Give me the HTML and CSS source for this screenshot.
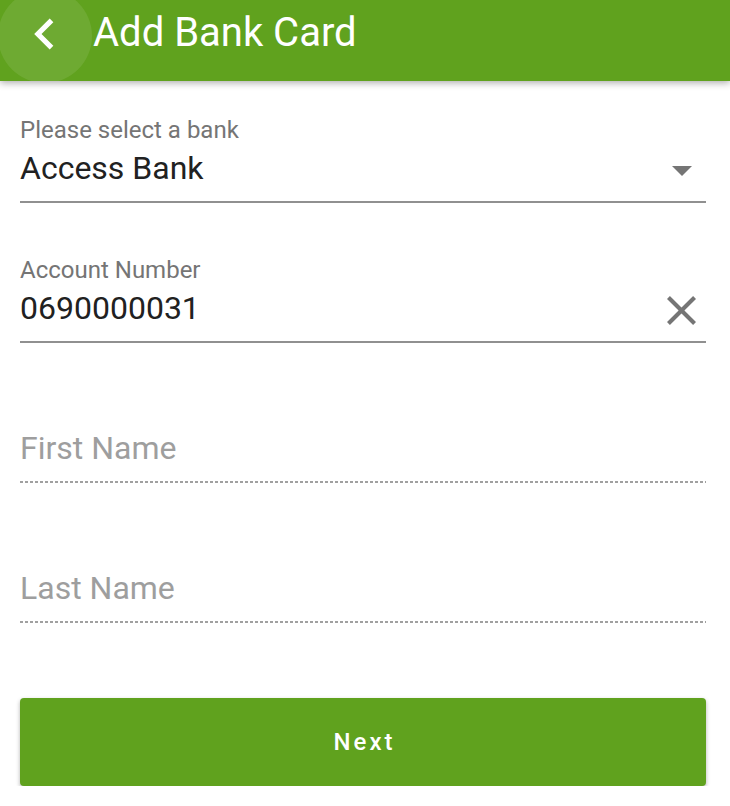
FILE: index.html
```html
<!DOCTYPE html>
<html lang="en">
<head>
<meta charset="utf-8">
<title>Add Bank Card</title>
<link rel="stylesheet" href="styles.css">
</head>
<body>
<header class="appbar">
  <div class="back">
    <svg class="back-icon" width="21" height="32" viewBox="7.6 5.8 8 12.4" aria-hidden="true">
      <path d="M15.41 7.41L14 6l-6 6 6 6 1.41-1.41L10.83 12z" fill="#fff"/>
    </svg>
  </div>
  <h1 class="title">Add Bank Card</h1>
</header>
<main class="form">
  <div class="field">
    <div class="label">Please select a bank</div>
    <div class="row">
      <span class="value">Access Bank</span>
      <svg class="icon-drop" width="20" height="10" viewBox="7 10 10 5" aria-hidden="true">
        <path d="M7 10l5 5 5-5z" fill="#757575"/>
      </svg>
    </div>
  </div>
  <div class="field">
    <div class="label">Account Number</div>
    <div class="row">
      <span class="value">0690000031</span>
      <svg class="icon-clear" width="29" height="29" viewBox="5 5 14 14" aria-hidden="true">
        <path d="M19 6.41L17.59 5 12 10.59 6.41 5 5 6.41 10.59 12 5 17.59 6.41 19 12 13.41 17.59 19 19 17.59 13.41 12z" fill="#757575"/>
      </svg>
    </div>
  </div>
  <div class="field dotted">
    <div class="label"></div>
    <div class="row">
      <span class="value placeholder">First Name</span>
    </div>
  </div>
  <div class="field dotted">
    <div class="label"></div>
    <div class="row">
      <span class="value placeholder">Last Name</span>
    </div>
  </div>
  <button class="next" type="button">Next</button>
</main>
</body>
</html>
```
FILE: styles.css
```css
* { box-sizing: border-box; }

html, body {
  margin: 0;
  padding: 0;
  background: #ffffff;
  font-family: Roboto, "Noto Sans", "Liberation Sans", sans-serif;
}

body { overflow: hidden; }

.appbar {
  position: relative;
  z-index: 1;
  height: 81px;
  background: #60a21e;
  display: flex;
  align-items: flex-start;
  box-shadow: 0 2px 7px rgba(0, 0, 0, 0.32);
}

.back {
  position: relative;
  width: 93px;
  height: 81px;
  flex: none;
  overflow: hidden;
}

.back::before {
  content: "";
  position: absolute;
  left: -2px;
  top: -11px;
  width: 94px;
  height: 94px;
  border-radius: 50%;
  background: rgba(255, 255, 255, 0.09);
}

.back-icon {
  position: absolute;
  left: 33px;
  top: 18px;
}

.title {
  margin: 0;
  padding-top: 9px;
  font-size: 40px;
  line-height: 48px;
  font-weight: 400;
  color: #ffffff;
}

.form {
  padding: 37px 24px 0 20px;
  display: flex;
  flex-direction: column;
}

.field {
  padding-bottom: 13px;
  border-bottom: 2px solid #909090;
  margin-bottom: 55px;
}

.field.dotted {
  border-bottom: none;
  padding-bottom: 15px;
  background-image: linear-gradient(to right, #a0a0a0 0 3px, transparent 3px 5px);
  background-size: 5px 2px;
  background-repeat: repeat-x;
  background-position: left bottom;
}

.label {
  height: 24px;
  font-size: 24px;
  line-height: 24px;
  color: #757575;
  margin-bottom: 6px;
  white-space: nowrap;
}

.row {
  display: flex;
  align-items: center;
  height: 40px;
}

.value {
  flex: 1;
  font-size: 32px;
  line-height: 40px;
  color: #212121;
}

.placeholder { color: #9e9e9e; }

.icon-drop {
  flex: none;
  margin-right: 14px;
  margin-top: 6px;
}

.icon-clear {
  flex: none;
  margin-right: 10px;
  margin-top: 4px;
}

.next {
  margin-top: 20px;
  height: 88px;
  width: 100%;
  border: none;
  border-radius: 4px;
  background: #60a21e;
  color: #ffffff;
  font-family: Roboto, "Noto Sans", "Liberation Sans", sans-serif;
  font-size: 24px;
  font-weight: 500;
  letter-spacing: 3px;
  text-indent: 3px;
  box-shadow: 0 2px 4px rgba(0, 0, 0, 0.3);
}
```
